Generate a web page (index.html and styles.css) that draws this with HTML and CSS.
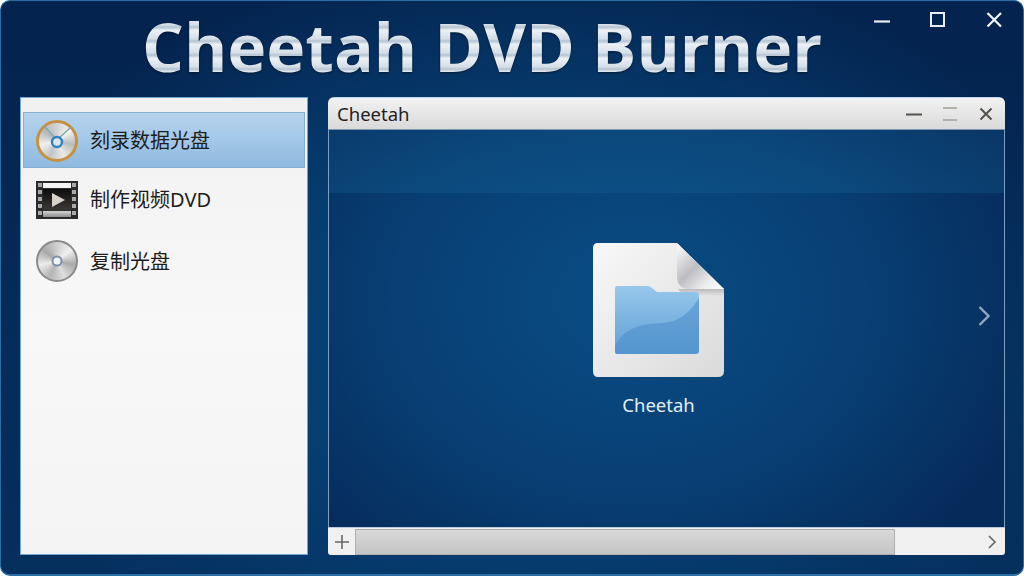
FILE: index.html
```html
<!DOCTYPE html>
<html lang="zh">
<head>
  <meta charset="UTF-8">
  <title>Cheetah DVD Burner</title>
  <link rel="stylesheet" href="styles.css">
</head>
<body>
  <div class="app">

    <!-- Encabezado -->
    <header class="top">
      <h1 class="brand">Cheetah DVD Burner</h1>
      <div class="win-btns">
        <svg width="20" height="20" viewBox="0 0 20 20"><path d="M2 11.500H18" stroke="#e8eef4" stroke-width="2.200"/></svg>
        <svg width="20" height="20" viewBox="0 0 20 20"><rect x="3" y="3" width="13" height="13" fill="none" stroke="#e8eef4" stroke-width="2"/></svg>
        <svg width="20" height="20" viewBox="0 0 20 20"><path d="M3.500 3L17 16.500M17 3L3.500 16.500" stroke="#f2f5f8" stroke-width="2.200"/></svg>
      </div>
    </header>

    <main class="body">

      <!-- Menu lateral -->
      <nav class="side">
        <div class="item active">
          <div class="disc disc-burn">
            <svg width="36" height="36" viewBox="0 0 36 36">
              <path d="M18 17L5 3M18 17L32 4" stroke="#7fa8ad" stroke-width="1.400" fill="none"/>
              <circle cx="18" cy="19" r="5" fill="#d9e6ee" stroke="#2e84bd" stroke-width="2.400"/>
            </svg>
          </div>
          <span>刻录数据光盘</span>
        </div>
        <div class="item">
          <svg class="film" width="42" height="38" viewBox="0 0 42 38">
            <defs>
              <linearGradient id="screen" x1="0" y1="0" x2="0" y2="1">
                <stop offset="0" stop-color="#0d0d0d"/>
                <stop offset="1" stop-color="#3c3935"/>
              </linearGradient>
              <linearGradient id="strip" x1="0" y1="0" x2="0" y2="1">
                <stop offset="0" stop-color="#d5d5d5"/>
                <stop offset="1" stop-color="#8d8d8d"/>
              </linearGradient>
            </defs>
            <rect width="42" height="38" fill="#2b2b2b"/>
            <rect x="7" y="2" width="28" height="5" fill="#f3f3f3"/>
            <rect x="7" y="8" width="28" height="21" fill="url(#screen)"/>
            <rect x="7" y="30" width="28" height="6" fill="url(#strip)"/>
            <g fill="#a9a9a9">
              <rect x="2" y="2" width="4" height="4"/><rect x="2" y="9" width="4" height="4"/>
              <rect x="2" y="16" width="4" height="4"/><rect x="2" y="23" width="4" height="4"/>
              <rect x="2" y="30" width="4" height="4"/><rect x="36" y="2" width="4" height="4"/>
              <rect x="36" y="9" width="4" height="4"/><rect x="36" y="16" width="4" height="4"/>
              <rect x="36" y="23" width="4" height="4"/><rect x="36" y="30" width="4" height="4"/>
            </g>
            <path d="M16 12L29 19L16 26Z" fill="#d8d4cc"/>
          </svg>
          <span>制作视频DVD</span>
        </div>
        <div class="item">
          <div class="disc disc-copy">
            <svg width="38" height="38" viewBox="0 0 38 38">
              <circle cx="19" cy="19" r="4.500" fill="#f2f5f8" stroke="#7d8fb0" stroke-width="2"/>
            </svg>
          </div>
          <span>复制光盘</span>
        </div>
      </nav>

      <!-- Panel -->
      <section class="panel">
        <div class="panel-title">
          <span>Cheetah</span>
          <div class="panel-btns">
            <svg width="18" height="18" viewBox="0 0 18 18"><path d="M1 9.500H17" stroke="#55524d" stroke-width="2.200"/></svg>
            <svg width="18" height="18" viewBox="0 0 18 18"><path d="M2 3H16M2 15H16" stroke="#b2b0ab" stroke-width="2"/></svg>
            <svg width="18" height="18" viewBox="0 0 18 18"><path d="M3.500 3.500L14.500 14.500M14.500 3.500L3.500 14.500" stroke="#55524d" stroke-width="2"/></svg>
          </div>
        </div>

        <div class="panel-view">
          <div class="band"></div>
          <div class="files">
            <div class="file">
              <svg width="134" height="136" viewBox="0 0 134 136">
                <defs>
                  <linearGradient id="paper" x1="0" y1="0" x2="1" y2="1">
                    <stop offset="0" stop-color="#f8f8f8"/>
                    <stop offset="1" stop-color="#dadada"/>
                  </linearGradient>
                  <linearGradient id="curl" x1="0" y1="0" x2="1" y2="1">
                    <stop offset="0" stop-color="#ffffff"/>
                    <stop offset="0.450" stop-color="#bdbdc2"/>
                    <stop offset="0.750" stop-color="#ececec"/>
                    <stop offset="1" stop-color="#ffffff"/>
                  </linearGradient>
                  <linearGradient id="curl-shade" x1="0" y1="0" x2="0" y2="1">
                    <stop offset="0" stop-color="#8f8f95" stop-opacity="0.500"/>
                    <stop offset="1" stop-color="#8f8f95" stop-opacity="0"/>
                  </linearGradient>
                  <linearGradient id="folder" x1="0" y1="0" x2="0" y2="1">
                    <stop offset="0" stop-color="#97c8ea"/>
                    <stop offset="1" stop-color="#5f9fd6"/>
                  </linearGradient>
                </defs>
                <path d="M6 1H85L132 47V129Q132 135 126 135H6Q1 135 1 129V6Q1 1 6 1Z" fill="url(#paper)"/>
                <path d="M86 47H132V54H92Z" fill="url(#curl-shade)"/>
                <path d="M85 1L132 47H98Q85 47 85 34Z" fill="url(#curl)"/>
                <path d="M25 44H55Q58 44 60 46L65 50H103Q107 50 107 54V109Q107 112 103 112H25Q23 112 23 109V47Q23 44 25 44Z" fill="url(#folder)"/>
                <path d="M23 109V104C34 84 50 82 70 81C88 80 98 70 107 56V109Q107 112 103 112H25Q23 112 23 109Z" fill="#4f8fcb" opacity="0.600"/>
              </svg>
              <span>Cheetah</span>
            </div>
          </div>
          <svg class="next" width="14" height="22" viewBox="0 0 14 22"><path d="M2.500 2L11.500 11L2.500 20" fill="none" stroke="#8fa9c0" stroke-width="2.400"/></svg>
        </div>

        <div class="panel-foot">
          <svg class="plus" width="14" height="14" viewBox="0 0 14 14"><path d="M7 0V14M0 7H14" stroke="#666" stroke-width="1.600"/></svg>
          <div class="track"><div class="thumb"></div></div>
          <svg class="foot-next" width="10" height="14" viewBox="0 0 10 14"><path d="M2 1L8 7L2 13" fill="none" stroke="#666" stroke-width="1.600"/></svg>
        </div>
      </section>

    </main>
  </div>
</body>
</html>
```

FILE: styles.css
```css
* { margin: 0; padding: 0; box-sizing: border-box; }

body {
  width: 1024px;
  height: 576px;
  overflow: hidden;
  font-family: "Noto Sans", "Noto Sans CJK SC", sans-serif;
  color: #222;
}

.app {
  width: 1024px;
  height: 576px;
  display: flex;
  flex-direction: column;
  border: 1px solid #2a6ea6;
  border-bottom-width: 2px;
  border-radius: 10px;
  background:
    radial-gradient(ellipse 560px 400px at 540px 340px, #08497f 0%, #063d70 50%, rgba(5, 48, 92, 0) 100%),
    linear-gradient(180deg, #04234e 0%, #052f5d 100%);
  background-color: #04234e;
}

/* Encabezado */
.top {
  height: 96px;
  position: relative;
  display: flex;
  justify-content: center;
  padding-right: 60px;
}

.brand {
  font-family: "Open Sans", sans-serif;
  font-size: 66px;
  font-weight: 700;
  line-height: 88px;
  height: 88px;
  margin-top: 1px;
  white-space: nowrap;
  background: repeating-linear-gradient(180deg, #eef2f6 0, #d5dde6 9px, #b4c3d2 11px, #e6ebf0 14px);
  -webkit-background-clip: text;
  background-clip: text;
  color: transparent;
  filter: drop-shadow(0 1px 1px rgba(0, 0, 0, 0.45));
}

.win-btns {
  position: absolute;
  top: 9px;
  right: 19px;
  display: flex;
  gap: 36px;
}

.body {
  flex: 1;
  display: flex;
  gap: 20px;
  padding: 0 18px 19px 19px;
}

/* Menu lateral */
.side {
  width: 288px;
  padding: 14px 2px 0;
  background: linear-gradient(180deg, #f1f1f1 0%, #f8f8f8 50%, #f4f4f4 100%);
  border: 1px solid #6fa6d2;
}

.item {
  height: 62px;
  display: flex;
  align-items: center;
  gap: 12px;
  padding-left: 12px;
  border: 1px solid transparent;
  font-size: 20px;
  line-height: 26px;
  color: #1d1d1d;
}

.item span { padding-top: 2px; }

.item.active {
  height: 56px;
  background: linear-gradient(180deg, #b6d3ec 0%, #a2c7e7 50%, #8fbae0 100%);
  border-color: #86b0d2;
}

.disc {
  width: 42px;
  height: 42px;
  flex: none;
  border-radius: 50%;
  display: flex;
  align-items: center;
  justify-content: center;
}

.disc-burn {
  margin-top: 2px;
  border: 3px solid #c9913f;
  background: conic-gradient(#d2d4d4, #f2f2f0, #b8bcbe, #e8e8e6, #c2c5c7, #f0f0ee, #b5b9bb, #d2d4d4);
}

.disc-copy {
  border: 2px solid #8a8a8a;
  background: conic-gradient(#cfcfcf, #f0f0f0, #aaa, #dedede, #b4b4b4, #ececec, #a8a8a8, #cfcfcf);
}

.film {
  flex: none;
  margin-top: 2px;
}

/* Panel */
.panel {
  flex: 1;
  display: flex;
  flex-direction: column;
  border-radius: 6px 6px 3px 3px;
  overflow: hidden;
}

.panel-title {
  height: 33px;
  flex: none;
  display: flex;
  align-items: center;
  justify-content: space-between;
  padding: 0 9px;
  font-size: 18.500px;
  color: #222;
  background: linear-gradient(180deg, #f2f2f2 0%, #dadada 100%);
  border-top: 1px solid #bcd7ee;
  border-bottom: 1px solid #7d97ae;
}

.panel-btns {
  display: flex;
  gap: 18px;
  padding-right: 1px;
}

.panel-view {
  flex: 1;
  position: relative;
  border-left: 1px solid #7c9fbe;
  border-right: 1px solid #7c9fbe;
  background: radial-gradient(ellipse 430px 340px at 300px 170px, #094d84 0%, #083f74 55%, #062a5a 100%);
}

.band {
  height: 63px;
  background: linear-gradient(180deg, rgba(20, 90, 140, 0.25), rgba(20, 100, 150, 0.3));
}

.files {
  display: flex;
  justify-content: center;
  padding: 49px 16px 0 0;
}

.file {
  display: flex;
  flex-direction: column;
  align-items: center;
  gap: 13px;
  font-size: 18.500px;
  line-height: 27px;
  color: #e4edf4;
}

.next {
  position: absolute;
  top: 175px;
  right: 13px;
}

.panel-foot {
  height: 28px;
  flex: none;
  display: flex;
  align-items: center;
  padding: 0 8px 0 7px;
  background: #f0f0f0;
  border-top: 1px solid #b9cbdb;
}

.plus { flex: none; }

.track {
  flex: 1;
  height: 26px;
  margin: 0 92px 0 6px;
}

.thumb {
  height: 100%;
  background: linear-gradient(180deg, #d8d8d8 0%, #c4c4c4 100%);
  border: 1px solid #aeaeae;
}

.foot-next { flex: none; }
```
